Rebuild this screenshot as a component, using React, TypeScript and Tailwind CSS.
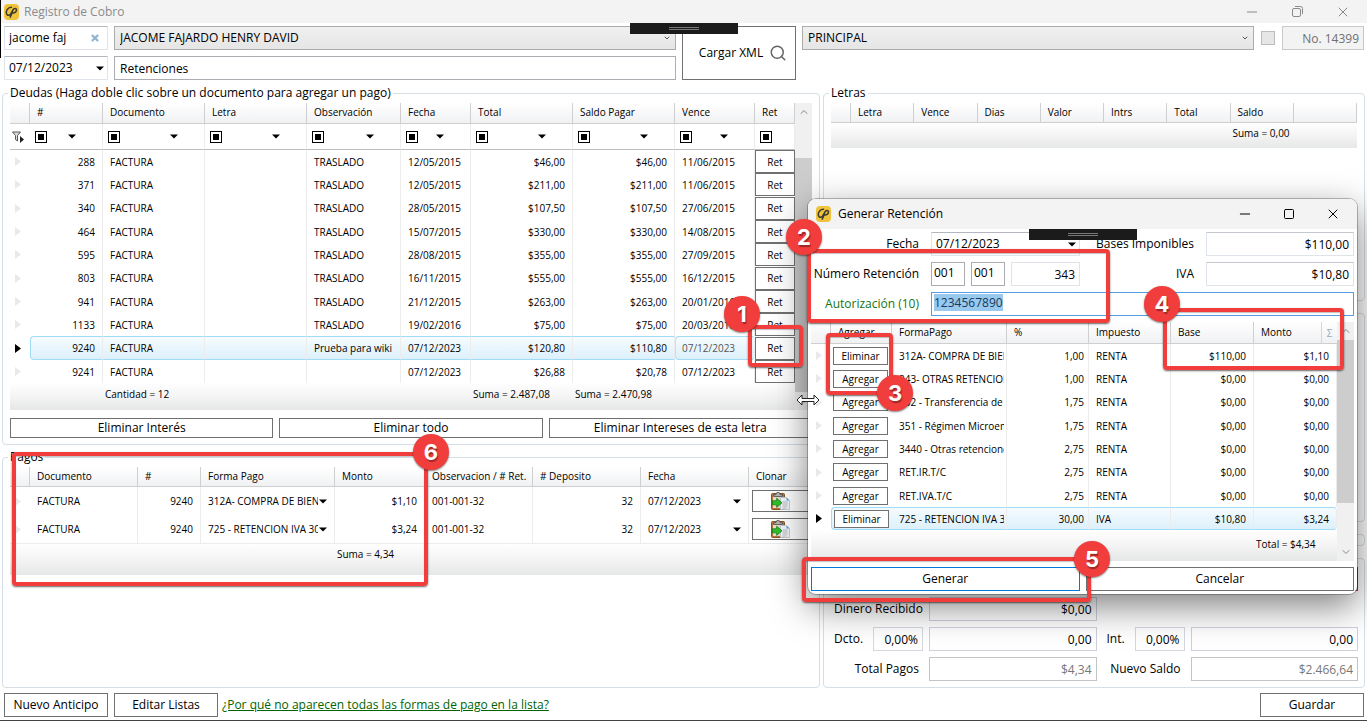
import { useEffect, useRef, type ReactNode } from 'react'
import { ChevronDown, ChevronUp, Minus, Search, Square, X } from 'lucide-react'
import clsx from 'clsx'

const DEUDAS = [
  { id: 1, num: '288', obs: 'TRASLADO', fecha: '12/05/2015', total: '$46,00', saldo: '$46,00', vence: '11/06/2015' },
  { id: 2, num: '371', obs: 'TRASLADO', fecha: '12/05/2015', total: '$211,00', saldo: '$211,00', vence: '11/06/2015' },
  { id: 3, num: '340', obs: 'TRASLADO', fecha: '28/05/2015', total: '$107,50', saldo: '$107,50', vence: '27/06/2015' },
  { id: 4, num: '464', obs: 'TRASLADO', fecha: '15/07/2015', total: '$330,00', saldo: '$330,00', vence: '14/08/2015' },
  { id: 5, num: '595', obs: 'TRASLADO', fecha: '28/08/2015', total: '$355,00', saldo: '$355,00', vence: '27/09/2015' },
  { id: 6, num: '803', obs: 'TRASLADO', fecha: '16/11/2015', total: '$555,00', saldo: '$555,00', vence: '16/12/2015' },
  { id: 7, num: '941', obs: 'TRASLADO', fecha: '21/12/2015', total: '$263,00', saldo: '$263,00', vence: '20/01/2016' },
  { id: 8, num: '1133', obs: 'TRASLADO', fecha: '19/02/2016', total: '$75,00', saldo: '$75,00', vence: '20/03/2016' },
  { id: 9, num: '9240', obs: 'Prueba para wiki', fecha: '07/12/2023', total: '$120,80', saldo: '$110,80', vence: '07/12/2023' },
  { id: 10, num: '9241', obs: '', fecha: '07/12/2023', total: '$26,88', saldo: '$20,78', vence: '07/12/2023' },
]

const PAGOS = [
  { forma: '312A- COMPRA DE BIENES', monto: '$1,10' },
  { forma: '725 - RETENCION IVA 30%', monto: '$3,24' },
]

const RETENCIONES = [
  { accion: 'Eliminar', forma: '312A- COMPRA DE BIENES', pct: '1,00', imp: 'RENTA', base: '$110,00', monto: '$1,10' },
  { accion: 'Agregar', forma: '343- OTRAS RETENCIONES', pct: '1,00', imp: 'RENTA', base: '$0,00', monto: '$0,00' },
  { accion: 'Agregar', forma: '332 - Transferencia de bienes', pct: '1,75', imp: 'RENTA', base: '$0,00', monto: '$0,00' },
  { accion: 'Agregar', forma: '351 - Régimen Microempresas', pct: '1,75', imp: 'RENTA', base: '$0,00', monto: '$0,00' },
  { accion: 'Agregar', forma: '3440 - Otras retenciones', pct: '2,75', imp: 'RENTA', base: '$0,00', monto: '$0,00' },
  { accion: 'Agregar', forma: 'RET.IR.T/C', pct: '2,75', imp: 'RENTA', base: '$0,00', monto: '$0,00' },
  { accion: 'Agregar', forma: 'RET.IVA.T/C', pct: '2,75', imp: 'RENTA', base: '$0,00', monto: '$0,00' },
  { accion: 'Eliminar', forma: '725 - RETENCION IVA 30%', pct: '30,00', imp: 'IVA', base: '$10,80', monto: '$3,24' },
]

const DEUDAS_COLS = ['w-5', 'w-[73px]', 'w-[102px]', 'w-[102px]', 'w-[94px]', 'w-[70px]', 'w-[102px]', 'w-[102px]', 'w-20', 'w-10']
const PAGOS_COLS = ['w-5', 'w-[108px]', 'w-[63px]', 'w-[134px]', 'w-[90px]', 'w-[108px]', 'w-[108px]', 'w-[108px]', '']
const RET_COLS = ['w-5', 'w-[61px]', 'w-[115px]', 'w-[82px]', 'w-[82px]', 'w-[83px]', '']

const BUTTON = 'border border-[#707070] bg-white text-center hover:bg-[#e5f1fb]'
const FIELD = 'h-6 min-w-0 border outline-none'
const GRID = 'w-full table-fixed border-separate border-spacing-0 text-[10px] leading-[14px] whitespace-nowrap'
const HEAD = 'overflow-hidden border-r border-b border-[#cfcfcf] bg-linear-to-b from-white to-[#f0f1f3] px-[7px] pb-0.5 text-left font-normal'
const CELL = 'overflow-hidden border-r border-[#ececec] px-[7px]'
const SELECTED = 'border-y border-y-[#9fdcf7] bg-linear-to-b from-[#f6fbfe] to-[#dcf0fb]'
const FOOT = 'bg-linear-to-b from-white via-[#f4f4f5] to-[#e6e7e7]'

function Logo() {
  return (
    <svg viewBox="0 0 15 16" className="h-4 w-[15px] shrink-0" aria-hidden="true">
      <rect width="15" height="16" rx="4" fill="#f0c33c" />
      <path
        d="M7.500 3.300C4.200 3.300 2.300 6 2.300 8.300c0 2.200 1.300 3.300 2.700 3 2-.5 2.800-3.500 3.900-5.300 1-1.600 3.300-2 3.600-.3.300 1.800-1.700 3.400-4 3.200M8.800 6.200C8 8.700 7.600 11 6.200 13.200"
        fill="none"
        stroke="#3c3a33"
        strokeWidth="1.500"
        strokeLinecap="round"
      />
    </svg>
  )
}

function Caret() {
  return (
    <svg viewBox="0 0 8 5" className="h-[5px] w-2 shrink-0" aria-hidden="true">
      <path d="M0 .5h8L4 4.500z" fill="#000" />
    </svg>
  )
}

function RowMark({ active = false }: { active?: boolean }) {
  return (
    <svg viewBox="0 0 6 9" className="ml-[5px] h-[9px] w-1.5" aria-hidden="true">
      <path d="M0 0l6 4.500L0 9z" fill={active ? '#000' : '#e9e9ed'} />
    </svg>
  )
}

function CloneIcon() {
  return (
    <svg viewBox="0 0 19 18" className="ml-[18px] h-[18px] w-[19px]" aria-hidden="true">
      <rect x=".5" y="1.500" width="13" height="16" rx="1" fill="#b9743c" stroke="#8a5426" />
      <path d="M2 4h10v12H2z" fill="#e9dccb" />
      <path d="M2.500 4.500h9V2.800H9.300L8.200.6H5.800L4.700 2.800H2.500z" fill="#b5b5b5" stroke="#4d4d4d" strokeWidth=".8" />
      <path d="M9.500 5.500h6l3 3v9h-9z" fill="#f2f5f8" stroke="#b9c2cb" strokeWidth=".8" />
      <path d="M15.500 5.500l3 3h-3z" fill="#58a6e8" />
      <path d="M11.500 10h5M11.500 12h5M11.500 14h5M11.500 16h4" stroke="#a5a9ad" strokeWidth=".8" />
      <path d="M1.500 8.800h4.200V6.200l5.300 4.600-5.300 4.600v-2.600H1.500z" fill="#2fc02b" stroke="#14820f" strokeWidth=".8" />
    </svg>
  )
}

function FilterIcon() {
  return (
    <svg viewBox="0 0 12 12" className="ml-0.5 size-3" aria-hidden="true">
      <path d="M.5 1h8L5.500 4.500V10L3.500 8.500v-4z" fill="#ddd" stroke="#555" />
      <path d="M8 5l4 3.500L8 12z" fill="#222" />
    </svg>
  )
}

/* dark handle docked at the top centre of every window */
function DockHandle({ className }: { className: string }) {
  return (
    <div className={clsx('absolute inset-x-0 mx-auto flex h-[11px] w-[108px] flex-col items-center justify-center gap-px bg-[#1b1b1b]', className)}>
      <span className="h-px w-[30px] bg-[#777]" />
      <span className="h-px w-[30px] bg-[#777]" />
    </div>
  )
}

function Select({ label, value, className }: { label: string; value: string; className?: string }) {
  return (
    <div className={clsx('relative', className)}>
      <select
        aria-label={label}
        className="block h-6 w-full appearance-none border border-[#acacac] bg-linear-to-b from-[#f0f0f0] to-[#e5e5e5] px-[5px] outline-none"
      >
        <option>{value}</option>
      </select>
      <ChevronDown className="pointer-events-none absolute top-2 right-[5px] size-2 text-[#555]" strokeWidth={3} />
    </div>
  )
}

function DateBox({ id, label, value }: { id: string; label?: string; value: string }) {
  return (
    <div className="flex h-6 items-center border border-[#dfe3ea] border-t-[#b4b7bd] bg-white pr-[3px]">
      <input id={id} aria-label={label} defaultValue={value} className="w-0 flex-1 px-1 outline-none" />
      <button type="button" aria-label="Abrir calendario">
        <Caret />
      </button>
    </div>
  )
}

function Head({ labels, height }: { labels: string[]; height: string }) {
  return (
    <thead>
      <tr className={height}>
        {labels.map((label, i) => (
          <th key={i} scope="col" className={HEAD}>
            {label}
          </th>
        ))}
      </tr>
    </thead>
  )
}

function Cols({ widths }: { widths: string[] }) {
  return (
    <colgroup>
      {widths.map((w, i) => (
        <col key={i} className={w} />
      ))}
    </colgroup>
  )
}

function ScrollBar({ thumb }: { thumb: string }) {
  return (
    <div className="flex w-[17px] shrink-0 flex-col items-center justify-between bg-[#f0f0f0]">
      <ChevronUp className="my-[3px] size-3 text-[#888]" />
      <div className={clsx('w-full bg-[#cdcdcd]', thumb)} />
      <ChevronDown className="my-[3px] size-3 text-[#888]" />
    </div>
  )
}

function Group({ title, className, children }: { title: string; className?: string; children: ReactNode }) {
  return (
    <fieldset className={clsx('min-w-0 rounded border border-[#d5dfe5] px-[7px] pt-0.5', className)}>
      <legend className="-ml-0.5 px-0.5 leading-4">{title}</legend>
      {children}
    </fieldset>
  )
}

function Callout({ n, box, dot }: { n: number; box: string; dot: string }) {
  return (
    <>
      <div className={clsx('pointer-events-none absolute z-20 rounded border-4 border-[#f23d3d] shadow-[0_1px_2px_rgba(0,0,0,0.6),inset_0_1px_1px_rgba(0,0,0,0.25)]', box)} />
      <div
        className={clsx(
          'pointer-events-none absolute z-20 flex size-9 items-center justify-center rounded-full bg-[#f23d3d] font-[Inter] text-[22px] font-bold text-white shadow-[0_1px_2px_rgba(0,0,0,0.5)] [text-shadow:1px_2px_1px_rgba(0,0,0,0.35)]',
          dot,
        )}
      >
        {n}
      </div>
    </>
  )
}

function DeudasGrid() {
  return (
    <div className="flex">
      <table className={GRID}>
        <Cols widths={DEUDAS_COLS} />
        <Head height="h-[21px]" labels={['', '#', 'Documento', 'Letra', 'Observación', 'Fecha', 'Total', 'Saldo Pagar', 'Vence', 'Ret']} />
        <tbody>
          <tr className="h-[26px]">
            <td className="border-b border-[#bdbdbd]">
              <FilterIcon />
            </td>
            {DEUDAS_COLS.slice(1).map((_, i) => (
              <td key={i} className="border-r border-b border-r-[#ececec] border-b-[#bdbdbd] p-0">
                <div className="flex items-center justify-between pr-[26px] pl-[5px]">
                  <button type="button" aria-label="Filtro" className="flex size-3 shrink-0 items-center justify-center border border-black">
                    <span className="size-1.5 bg-black" />
                  </button>
                  {i < 8 && <Caret />}
                </div>
              </td>
            ))}
          </tr>
          {DEUDAS.map((d) => {
            const sel = d.id === 9
            const cell = clsx(CELL, sel && SELECTED)
            return (
              <tr key={d.id} className="h-[23px] nth-[3n+1]:h-6">
                <td>
                  <RowMark active={sel} />
                </td>
                <td className={clsx(cell, 'text-right', sel && 'rounded-l border-l border-l-[#9fdcf7]')}>{d.num}</td>
                <td className={cell}>FACTURA</td>
                <td className={cell} />
                <td className={cell}>{d.obs}</td>
                <td className={cell}>{d.fecha}</td>
                <td className={clsx(cell, 'text-right')}>{d.total}</td>
                <td className={clsx(cell, 'text-right')}>{d.saldo}</td>
                <td className={clsx(cell, sel && 'rounded text-[#555] shadow-[inset_1px_0_0_#b9e4f8]')}>{d.vence}</td>
                <td className="p-0">
                  <button type="button" className={clsx(BUTTON, 'block h-[23px] w-full')}>
                    Ret
                  </button>
                </td>
              </tr>
            )
          })}
        </tbody>
        <tfoot>
          <tr className={clsx('h-[27px] align-top', FOOT)}>
            <td />
            <td />
            <td className="pt-1 pl-0.5">Cantidad = 12</td>
            <td />
            <td />
            <td />
            <td className="pt-1 pl-0.5">Suma = 2.487,08</td>
            <td className="pt-1 pl-0.5">Suma = 2.470,98</td>
            <td />
            <td />
          </tr>
        </tfoot>
      </table>
      <ScrollBar thumb="mt-[37px] flex-1" />
    </div>
  )
}

function PagosGrid() {
  return (
    <table className={GRID}>
      <Cols widths={PAGOS_COLS} />
      <Head height="h-5" labels={['', 'Documento', '#', 'Forma Pago', 'Monto', 'Observacion / # Ret.', '# Deposito', 'Fecha', 'Clonar']} />
      <tbody>
        {PAGOS.map((p) => (
          <tr key={p.forma} className="h-7">
            <td>
              <RowMark />
            </td>
            <td className={CELL}>FACTURA</td>
            <td className={clsx(CELL, 'text-right')}>9240</td>
            <td className={CELL}>
              <div className="flex items-center gap-px">
                <span className="flex-1 overflow-hidden">{p.forma}</span>
                <Caret />
              </div>
            </td>
            <td className={clsx(CELL, 'text-right')}>{p.monto}</td>
            <td className={CELL}>001-001-32</td>
            <td className={clsx(CELL, 'text-right')}>32</td>
            <td className={CELL}>
              <div className="flex items-center justify-between">
                07/12/2023
                <Caret />
              </div>
            </td>
            <td className="pl-[3px]">
              <button type="button" aria-label="Clonar" className={clsx(BUTTON, 'block h-[22px] w-full')}>
                <CloneIcon />
              </button>
            </td>
          </tr>
        ))}
      </tbody>
      <tfoot>
        <tr className={clsx('h-8 align-top', FOOT)}>
          <td colSpan={4} className="border-t border-[#ececec]" />
          <td className="border-t border-[#ececec] pt-[3px] pl-0.5">Suma = 4,34</td>
          <td colSpan={4} className="border-t border-[#ececec]" />
        </tr>
      </tfoot>
    </table>
  )
}

function LetrasGrid() {
  return (
    <table className={GRID}>
      <Cols widths={['w-5', '', '', '', '', '', '', '', '']} />
      <Head height="h-5" labels={['', 'Letra', 'Vence', 'Dias', 'Valor', 'Intrs', 'Total', 'Saldo', '']} />
      <tfoot>
        <tr className={clsx('h-[25px] align-top', FOOT)}>
          <td colSpan={7} />
          <td className="pt-[3px] pl-0.5">Suma = 0,00</td>
          <td />
        </tr>
      </tfoot>
    </table>
  )
}

function Totales() {
  const box = clsx(FIELD, 'w-full bg-transparent px-1 text-right')
  return (
    <div className="grid grid-cols-[93px_1fr_82px_1fr] items-center gap-1.5 rounded border border-[#d5dfe5] px-1.5 pt-2 pb-1.5">
      <div className="col-span-4 h-6 border border-[#e81123]" />
      <label htmlFor="dinero" className="pl-1">Dinero Recibido</label>
      <input id="dinero" defaultValue="$0,00" className={clsx(box, 'border-[#ccd1da]')} />
      <span />
      <span />
      <div className="flex items-center justify-between pl-1">
        <label htmlFor="dcto">Dcto.</label>
        <input id="dcto" defaultValue="0,00%" className={clsx(FIELD, 'w-[50px] border-[#d3d8e0] bg-transparent px-1 text-right')} />
      </div>
      <input aria-label="Valor descuento" defaultValue="0,00" className={clsx(box, 'border-[#ccd1da]')} />
      <div className="flex items-center justify-between pl-1">
        <label htmlFor="int">Int.</label>
        <input id="int" defaultValue="0,00%" className={clsx(FIELD, 'w-[50px] border-[#d3d8e0] bg-transparent px-1 text-right')} />
      </div>
      <input aria-label="Valor interés" defaultValue="0,00" className={clsx(box, 'border-[#ccd1da]')} />
      <label htmlFor="total" className="pr-1 text-right">Total Pagos</label>
      <input id="total" readOnly defaultValue="$4,34" className={clsx(box, 'border-[#c4c4c4] text-[#777]')} />
      <label htmlFor="nuevo" className="pr-1 text-right">Nuevo Saldo</label>
      <input id="nuevo" readOnly defaultValue="$2.466,64" className={clsx(box, 'border-[#c4c4c4] text-[#777]')} />
    </div>
  )
}

function RetencionDialog() {
  const auth = useRef<HTMLInputElement>(null)

  useEffect(() => {
    auth.current?.focus()
    auth.current?.select()
  }, [])

  return (
    <div
      role="dialog"
      aria-label="Generar Retención"
      className="absolute top-[199px] right-2.5 z-10 w-[549px] rounded-lg bg-white shadow-[0_0_0_1px_rgba(0,0,0,0.25),0_12px_36px_rgba(0,0,0,0.5)]"
    >
      <div className="flex h-[30px] items-center rounded-t-lg bg-[#f3f3f3] px-2">
        <Logo />
        <span className="ml-[7px] flex-1">Generar Retención</span>
        <div className="flex items-center gap-[30px] pr-2">
          <button type="button" aria-label="Minimizar"><Minus className="size-4" strokeWidth={1.5} /></button>
          <button type="button" aria-label="Maximizar"><Square className="size-3" strokeWidth={2} /></button>
          <button type="button" aria-label="Cerrar"><X className="size-4" strokeWidth={1.5} /></button>
        </div>
      </div>
      <DockHandle className="top-[30px]" />

      <div className="px-[3px] py-[3px]">
        <div className="grid grid-cols-[108px_149px_1fr_148px] items-center gap-x-3 gap-y-1.5 text-right">
          <label htmlFor="fecha-ret">Fecha</label>
          <DateBox id="fecha-ret" value="07/12/2023" />
          <label htmlFor="bases">Bases Imponibles</label>
          <input id="bases" defaultValue="$110,00" className={clsx(FIELD, 'border-[#dfe3ea] border-t-[#c4c7cd] px-1 text-right')} />

          <label htmlFor="serie">Número Retención</label>
          <div className="flex gap-1.5">
            <input id="serie" defaultValue="001" className={clsx(FIELD, 'w-[34px] border-[#abadb3] px-0.5 pb-1')} />
            <input aria-label="Punto de emisión" defaultValue="001" className={clsx(FIELD, 'w-[34px] border-[#abadb3] px-0.5 pb-1')} />
            <input aria-label="Secuencial" defaultValue="343" className={clsx(FIELD, 'flex-1 border-[#dfe3ea] px-1 text-right')} />
          </div>
          <label htmlFor="iva">IVA</label>
          <input id="iva" defaultValue="$10,80" className={clsx(FIELD, 'border-[#dfe3ea] border-t-[#c4c7cd] px-1 text-right')} />

          <label htmlFor="auth" className="text-[#117711]">Autorización (10)</label>
          <input
            id="auth"
            ref={auth}
            defaultValue="1234567890"
            className={clsx(FIELD, 'col-span-3 border-[#569de5] px-0.5 pb-1 selection:bg-[#99c9ef] selection:text-[#143a5c]')}
          />
        </div>

        <div className="mt-1.5 flex">
          <table className={GRID}>
            <Cols widths={RET_COLS} />
            <thead>
              <tr className="h-[22px]">
                {['', 'Agregar', 'FormaPago', '%', 'Impuesto', 'Base'].map((label, i) => (
                  <th key={i} scope="col" className={HEAD}>
                    {label}
                  </th>
                ))}
                <th scope="col" className="border-b border-[#cfcfcf] bg-linear-to-b from-white to-[#f0f1f3] p-0 font-normal">
                  <div className="flex h-[21px] items-center justify-between pl-[7px]">
                    <span className="pb-0.5">Monto</span>
                    <span className="flex h-full w-4 items-center justify-center border-l border-[#c4dbe8] text-[#9aa9b5]">Σ</span>
                  </div>
                </th>
              </tr>
            </thead>
            <tbody>
              {RETENCIONES.map((r, i) => {
                const sel = i === 7
                const cell = clsx(CELL, sel && SELECTED)
                return (
                  <tr key={r.forma} className="h-[23px] nth-[3n]:h-6">
                    <td>
                      <RowMark active={sel} />
                    </td>
                    <td className={clsx('px-0.5', sel && SELECTED, sel && 'rounded-l border-l border-l-[#9fdcf7]')}>
                      <button type="button" className={clsx(BUTTON, 'block h-[18px] w-[55px]')}>
                        {r.accion}
                      </button>
                    </td>
                    <td className={clsx('overflow-hidden border-r border-[#ececec] pr-0.5 pl-[7px]', sel && SELECTED)}>
                      <div className="overflow-hidden">{r.forma}</div>
                    </td>
                    <td className={clsx('overflow-hidden border-r border-[#ececec] pr-1 text-right', sel && SELECTED)}>{r.pct}</td>
                    <td className={cell}>{r.imp}</td>
                    <td className={clsx(cell, 'text-right')}>{r.base}</td>
                    <td className={clsx(cell, 'text-right', sel && 'rounded-r')}>{r.monto}</td>
                  </tr>
                )
              })}
            </tbody>
            <tfoot>
              <tr className={clsx('h-[31px]', FOOT)}>
                <td colSpan={6} />
                <td className="pb-1 pl-0.5">Total = $4,34</td>
              </tr>
            </tfoot>
          </table>
          <ScrollBar thumb="mb-10 flex-1" />
        </div>

        <div className="mt-1.5 grid grid-cols-2 gap-1.5">
          <button type="button" className="h-6 border border-[#0078d7] bg-white">Generar</button>
          <button type="button" className={clsx(BUTTON, 'h-6')}>Cancelar</button>
        </div>
      </div>

      <Callout n={2} box="-left-px top-[50px] h-[74px] w-[303px]" dot="-left-[22px] top-5" />
      <Callout n={3} box="left-[18px] top-[134px] h-[62px] w-[67px]" dot="left-[69px] top-44" />
      <Callout n={4} box="left-[355px] top-[109px] h-[62px] w-[181px]" dot="left-[336px] top-[87px]" />
      <Callout n={5} box="-left-1.5 top-[358px] h-[45px] w-[289px]" dot="left-[266px] top-[342px]" />
    </div>
  )
}

export default function App() {
  return (
    <div className="relative flex min-h-screen flex-col overflow-hidden border-b border-[#444] bg-white font-['Open_Sans',sans-serif] text-xs leading-4 text-black">
      <header className="flex h-[23px] items-center bg-[#f3f3f3] px-1 text-[#8a8a8a]">
        <Logo />
        <h1 className="ml-[5px] flex-1">Registro de Cobro</h1>
        <div className="flex items-center gap-[30px] pr-3">
          <button type="button" aria-label="Minimizar"><Minus className="size-4" strokeWidth={1.5} /></button>
          <button type="button" aria-label="Restaurar">
            <svg viewBox="0 0 11 11" className="mx-0.5 size-[11px]" fill="none" stroke="currentColor">
              <rect x=".5" y="2.500" width="8" height="8" rx="1.500" />
              <path d="M3 .5h5.500a2 2 0 0 1 2 2V8" />
            </svg>
          </button>
          <button type="button" aria-label="Cerrar"><X className="size-4" strokeWidth={1.5} /></button>
        </div>
      </header>
      <DockHandle className="top-[23px] z-10" />
      <span className="absolute top-0 left-0 h-[58px] w-px bg-black" />

      <div className="flex gap-1.5 px-[3px] pt-[3px] pl-1">
        <div className="grid w-[104px] gap-1.5">
          <div className="flex h-6 items-center border border-[#dfe3ea] border-t-[#b4b7bd] pr-[7px]">
            <input aria-label="Buscar cliente" defaultValue="jacome faj" className="w-0 flex-1 px-1 outline-none" />
            <button type="button" aria-label="Limpiar">
              <X className="size-2.5 text-[#8fb3d0]" strokeWidth={5} />
            </button>
          </div>
          <DateBox id="fecha" label="Fecha" value="07/12/2023" />
        </div>
        <div className="grid w-[562px] gap-1.5">
          <Select label="Cliente" value="JACOME FAJARDO HENRY DAVID" />
          <input aria-label="Detalle" defaultValue="Retenciones" className={clsx(FIELD, 'border-[#abadb3] px-[5px]')} />
        </div>
        <button type="button" className={clsx(BUTTON, 'flex w-[114px] items-center justify-center gap-1.5 pl-2')}>
          Cargar XML
          <Search className="size-[18px] text-[#666]" strokeWidth={2} />
        </button>
        <Select label="Bodega" value="PRINCIPAL" className="flex-1" />
        <input type="checkbox" disabled aria-label="Bloqueado" className="mx-px mt-[5px] size-3.5 appearance-none border border-[#bcbcbc] bg-[#e6e6e6]" />
        <input aria-label="Número" disabled defaultValue="No. 14399" className={clsx(FIELD, 'w-[82px] border-[#c9c9c9] bg-[#f3f3f3] px-1 text-right text-[#707070]')} />
      </div>

      <main className="mt-[5px] grid flex-1 grid-cols-[818fr_542fr] gap-[3px] pr-0.5 pl-0.5">
        <div className="flex min-w-0 flex-col gap-1">
          <Group title="Deudas (Haga doble clic sobre un documento para agregar un pago)" className="pb-1.5">
            <DeudasGrid />
            <div className="mt-2 grid grid-cols-3 gap-1.5">
              <button type="button" className={clsx(BUTTON, 'h-5')}>Eliminar Interés</button>
              <button type="button" className={clsx(BUTTON, 'h-5')}>Eliminar todo</button>
              <button type="button" className={clsx(BUTTON, 'h-5')}>Eliminar Intereses de esta letra</button>
            </div>
          </Group>
          <Group title="Pagos" className="flex-1">
            <PagosGrid />
          </Group>
        </div>

        <div className="flex min-w-0 flex-col gap-3">
          <Group title="Letras" className="flex-1">
            <LetrasGrid />
          </Group>
          <div className="h-[209px] rounded border border-[#d5dfe5]" />
          <div className="h-3 rounded border border-[#d5dfe5]" />
          <Totales />
        </div>
      </main>

      <footer className="flex items-center pt-[5px] pr-[3px] pb-[3px] pl-1">
        <button type="button" className={clsx(BUTTON, 'h-6 w-[104px]')}>Nuevo Anticipo</button>
        <button type="button" className={clsx(BUTTON, 'ml-1.5 h-6 w-[104px]')}>Editar Listas</button>
        <a href="#formas" className="ml-1 text-[#006400] underline">¿Por qué no aparecen todas las formas de pago en la lista?</a>
        <button type="button" className={clsx(BUTTON, 'ml-auto h-6 w-[104px]')}>Guardar</button>
      </footer>

      <RetencionDialog />

      <Callout n={1} box="left-[748px] top-[325px] h-[42px] w-[55px]" dot="left-[724px] top-[296px]" />
      <Callout n={6} box="left-3 top-[452px] h-[134px] w-[416px]" dot="left-[413px] top-[434px]" />

      {/* horizontal resize pointer */}
      <svg viewBox="0 0 24 12" className="absolute top-[394px] left-[796px] z-30 h-3 w-6" aria-hidden="true">
        <path d="M1 6l5-5v3.500h12V1l5 5-5 5V7.500H6V11z" fill="#fff" stroke="#222" />
      </svg>
    </div>
  )
}
